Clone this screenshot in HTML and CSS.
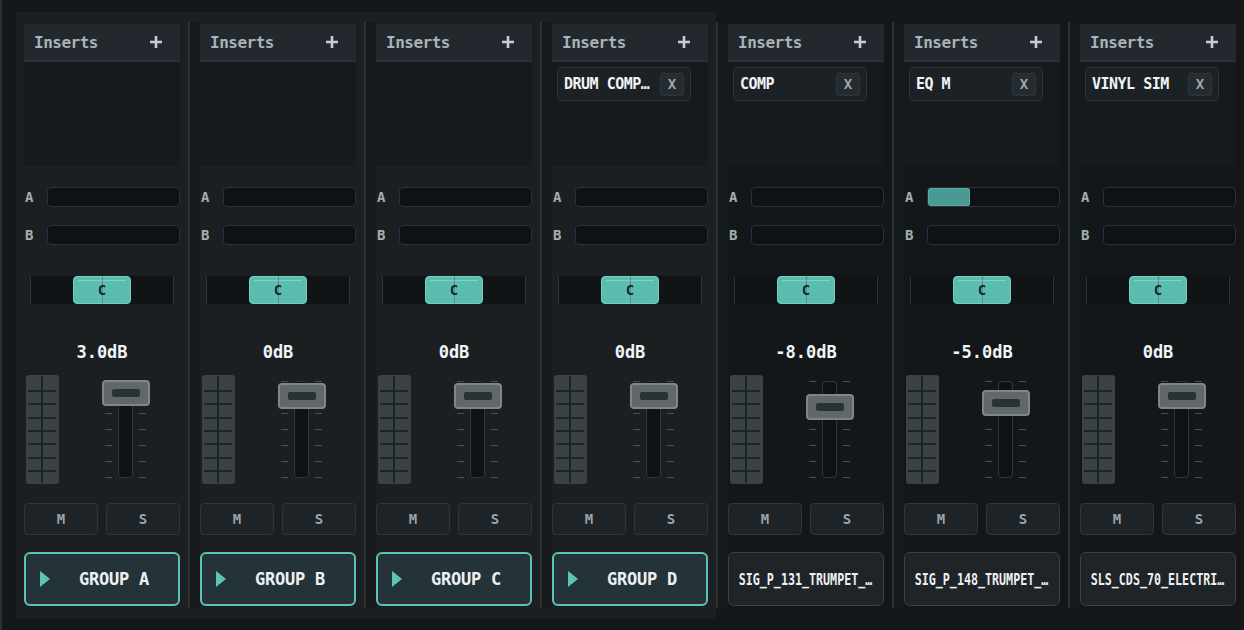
FILE: index.html
```html
<!DOCTYPE html>
<html lang="en">
<head>
  <meta charset="utf-8">
  <title>Mixer</title>
  <link rel="stylesheet" href="styles.css">
</head>
<body>
  <div class="mixer">

    <div class="group">

      <!-- group A -->
      <div class="strip">
        <div class="inserts-head"><span>Inserts</span><svg class="plus" width="12" height="12" viewBox="0 0 12 12"><path d="M6 0V12M0 6H12"/></svg></div>
        <div class="inserts-list"></div>
        <div class="sends">
          <div class="send"><span class="send-label">A</span><div class="send-bar"></div></div>
          <div class="send"><span class="send-label">B</span><div class="send-bar"></div></div>
        </div>
        <div class="pan"><div class="pan-knob">C</div></div>
        <div class="gain">3.0dB</div>
        <div class="levels">
          <div class="meter"></div>
          <div class="fader"><div class="fader-track"></div><div class="fader-knob" style="top: 0px"><span></span></div></div>
        </div>
        <div class="mute-solo"><button class="ms">M</button><button class="ms">S</button></div>
        <button class="name group-name"><svg class="play" width="10" height="16" viewBox="0 0 10 16"><path d="M0 0L10 8L0 16Z"/></svg><span>GROUP A</span></button>
      </div>
      <div class="handle"></div>

      <!-- group B -->
      <div class="strip">
        <div class="inserts-head"><span>Inserts</span><svg class="plus" width="12" height="12" viewBox="0 0 12 12"><path d="M6 0V12M0 6H12"/></svg></div>
        <div class="inserts-list"></div>
        <div class="sends">
          <div class="send"><span class="send-label">A</span><div class="send-bar"></div></div>
          <div class="send"><span class="send-label">B</span><div class="send-bar"></div></div>
        </div>
        <div class="pan"><div class="pan-knob">C</div></div>
        <div class="gain">0dB</div>
        <div class="levels">
          <div class="meter"></div>
          <div class="fader"><div class="fader-track"></div><div class="fader-knob" style="top: 3px"><span></span></div></div>
        </div>
        <div class="mute-solo"><button class="ms">M</button><button class="ms">S</button></div>
        <button class="name group-name"><svg class="play" width="10" height="16" viewBox="0 0 10 16"><path d="M0 0L10 8L0 16Z"/></svg><span>GROUP B</span></button>
      </div>
      <div class="handle"></div>

      <!-- group C -->
      <div class="strip">
        <div class="inserts-head"><span>Inserts</span><svg class="plus" width="12" height="12" viewBox="0 0 12 12"><path d="M6 0V12M0 6H12"/></svg></div>
        <div class="inserts-list"></div>
        <div class="sends">
          <div class="send"><span class="send-label">A</span><div class="send-bar"></div></div>
          <div class="send"><span class="send-label">B</span><div class="send-bar"></div></div>
        </div>
        <div class="pan"><div class="pan-knob">C</div></div>
        <div class="gain">0dB</div>
        <div class="levels">
          <div class="meter"></div>
          <div class="fader"><div class="fader-track"></div><div class="fader-knob" style="top: 3px"><span></span></div></div>
        </div>
        <div class="mute-solo"><button class="ms">M</button><button class="ms">S</button></div>
        <button class="name group-name"><svg class="play" width="10" height="16" viewBox="0 0 10 16"><path d="M0 0L10 8L0 16Z"/></svg><span>GROUP C</span></button>
      </div>
      <div class="handle"></div>

      <!-- group D -->
      <div class="strip">
        <div class="inserts-head"><span>Inserts</span><svg class="plus" width="12" height="12" viewBox="0 0 12 12"><path d="M6 0V12M0 6H12"/></svg></div>
        <div class="inserts-list">
          <div class="insert"><span class="insert-name">DRUM COMP…</span><button class="insert-x">X</button></div>
        </div>
        <div class="sends">
          <div class="send"><span class="send-label">A</span><div class="send-bar"></div></div>
          <div class="send"><span class="send-label">B</span><div class="send-bar"></div></div>
        </div>
        <div class="pan"><div class="pan-knob">C</div></div>
        <div class="gain">0dB</div>
        <div class="levels">
          <div class="meter"></div>
          <div class="fader"><div class="fader-track"></div><div class="fader-knob" style="top: 3px"><span></span></div></div>
        </div>
        <div class="mute-solo"><button class="ms">M</button><button class="ms">S</button></div>
        <button class="name group-name"><svg class="play" width="10" height="16" viewBox="0 0 10 16"><path d="M0 0L10 8L0 16Z"/></svg><span>GROUP D</span></button>
      </div>

    </div>
    <div class="handle"></div>

    <!-- channels -->
    <div class="strip">
      <div class="inserts-head"><span>Inserts</span><svg class="plus" width="12" height="12" viewBox="0 0 12 12"><path d="M6 0V12M0 6H12"/></svg></div>
      <div class="inserts-list">
        <div class="insert"><span class="insert-name">COMP</span><button class="insert-x">X</button></div>
      </div>
      <div class="sends">
        <div class="send"><span class="send-label">A</span><div class="send-bar"></div></div>
        <div class="send"><span class="send-label">B</span><div class="send-bar"></div></div>
      </div>
      <div class="pan"><div class="pan-knob">C</div></div>
      <div class="gain">-8.0dB</div>
      <div class="levels">
        <div class="meter"></div>
        <div class="fader"><div class="fader-track"></div><div class="fader-knob" style="top: 14px"><span></span></div></div>
      </div>
      <div class="mute-solo"><button class="ms">M</button><button class="ms">S</button></div>
      <button class="name"><span>SIG_P_131_TRUMPET_…</span></button>
    </div>
    <div class="handle"></div>

    <div class="strip">
      <div class="inserts-head"><span>Inserts</span><svg class="plus" width="12" height="12" viewBox="0 0 12 12"><path d="M6 0V12M0 6H12"/></svg></div>
      <div class="inserts-list">
        <div class="insert"><span class="insert-name">EQ M</span><button class="insert-x">X</button></div>
      </div>
      <div class="sends">
        <div class="send"><span class="send-label">A</span><div class="send-bar"><div class="send-fill" style="width: 32%"></div></div></div>
        <div class="send"><span class="send-label">B</span><div class="send-bar"></div></div>
      </div>
      <div class="pan"><div class="pan-knob">C</div></div>
      <div class="gain">-5.0dB</div>
      <div class="levels">
        <div class="meter"></div>
        <div class="fader"><div class="fader-track"></div><div class="fader-knob" style="top: 10px"><span></span></div></div>
      </div>
      <div class="mute-solo"><button class="ms">M</button><button class="ms">S</button></div>
      <button class="name"><span>SIG_P_148_TRUMPET_…</span></button>
    </div>
    <div class="handle"></div>

    <div class="strip">
      <div class="inserts-head"><span>Inserts</span><svg class="plus" width="12" height="12" viewBox="0 0 12 12"><path d="M6 0V12M0 6H12"/></svg></div>
      <div class="inserts-list">
        <div class="insert"><span class="insert-name">VINYL SIM</span><button class="insert-x">X</button></div>
      </div>
      <div class="sends">
        <div class="send"><span class="send-label">A</span><div class="send-bar"></div></div>
        <div class="send"><span class="send-label">B</span><div class="send-bar"></div></div>
      </div>
      <div class="pan"><div class="pan-knob">C</div></div>
      <div class="gain">0dB</div>
      <div class="levels">
        <div class="meter"></div>
        <div class="fader"><div class="fader-track"></div><div class="fader-knob" style="top: 3px"><span></span></div></div>
      </div>
      <div class="mute-solo"><button class="ms">M</button><button class="ms">S</button></div>
      <button class="name"><span>SLS_CDS_70_ELECTRI…</span></button>
    </div>

  </div>
</body>
</html>
```

FILE: styles.css
```css
* {
  box-sizing: border-box;
}

body {
  margin: 0;
  height: 630px;
  overflow: hidden;
  padding: 12px 0 0 14px;
  border-left: 2px solid #2a3034;
  background: #13171a;
  font-family: "DejaVu Sans Mono", "Liberation Mono", monospace;
  font-weight: bold;
}

button {
  font-family: inherit;
  font-weight: bold;
  padding: 0;
  margin: 0;
  cursor: pointer;
}

.mixer {
  display: flex;
  align-items: stretch;
}

.group {
  display: flex;
  padding-left: 8px;
  background: #1b1f22;
}

.strip {
  flex: none;
  width: 164px;
  padding: 12px 8px 12px 0;
  display: flex;
  flex-direction: column;
}

.handle {
  flex: none;
  width: 12px;
  margin: 10px 0;
  border-left: 2px solid #2a3034;
  background: #15191c;
}

/* inserts */

.inserts-head {
  height: 38px;
  padding: 0 18px 0 10px;
  display: flex;
  align-items: center;
  justify-content: space-between;
  border-bottom: 2px solid #2c3338;
  background: #22282d;
  color: #a9b3b9;
  font-size: 16px;
  letter-spacing: -0.5px;
}

.plus path {
  stroke: #c6ced3;
  stroke-width: 2.6;
}

.inserts-list {
  height: 104px;
  padding: 5px;
  background: #161a1f;
}

.insert {
  width: 134px;
  height: 34px;
  padding: 0 6px;
  display: flex;
  align-items: center;
  justify-content: space-between;
  border: 1px solid #30373c;
  border-radius: 5px;
  background: #1c2126;
}

.insert-name {
  color: #f1f4f6;
  font-size: 15px;
  letter-spacing: -0.5px;
  white-space: nowrap;
}

.insert-x {
  width: 24px;
  height: 23px;
  border: 1px solid #30373c;
  border-radius: 3px;
  background: #252b30;
  color: #a0a9ae;
  font-size: 14px;
}

/* sends */

.sends {
  margin-top: 21px;
  display: flex;
  flex-direction: column;
  gap: 18px;
}

.send {
  height: 20px;
  display: flex;
  align-items: center;
}

.send-label {
  width: 23px;
  padding-left: 1px;
  color: #a4aeb4;
  font-size: 14px;
}

.send-bar {
  flex: 1;
  height: 20px;
  border: 1px solid #2b3236;
  border-radius: 4px;
  background: #0e1215;
  overflow: hidden;
}

.send-fill {
  height: 100%;
  border-radius: 3px;
  background: #4a9a93;
  box-shadow: inset 0 0 0 1px #58aba3;
}

/* pan */

.pan {
  position: relative;
  height: 28px;
  margin: 31px 6px 0;
  display: flex;
  justify-content: center;
  border-left: 1px solid #2d3438;
  border-right: 1px solid #2d3438;
  background: #0f1316;
}

.pan::after {
  content: "";
  position: absolute;
  left: 50%;
  top: -2px;
  bottom: -2px;
  width: 1px;
  background: rgba(42, 50, 54, 0.3);
}

.pan-knob {
  position: relative;
  width: 58px;
  height: 28px;
  display: flex;
  align-items: center;
  justify-content: center;
  border: 1px solid #74cfc3;
  border-radius: 4px;
  background: #5bbcb0;
  color: #1b2628;
  font-size: 14px;
}

.pan-knob::before {
  content: "";
  position: absolute;
  top: 3px;
  left: 4px;
  right: 4px;
  height: 1px;
  background: rgba(255, 255, 255, 0.28);
}

/* gain, meter and fader */

.gain {
  margin-top: 38px;
  line-height: 20px;
  text-align: center;
  color: #f2f4f5;
  font-size: 17px;
}

.levels {
  height: 109px;
  margin-top: 13px;
  display: flex;
  align-items: flex-start;
}

.meter {
  position: relative;
  width: 33px;
  height: 109px;
  margin-left: 2px;
  border-radius: 3px;
  background: #3a4245;
}

.meter::before {
  content: "";
  position: absolute;
  left: 15px;
  top: 1px;
  bottom: 1px;
  width: 2px;
  background: #1f2427;
}

.meter::after {
  content: "";
  position: absolute;
  left: 2px;
  right: 3px;
  top: 15px;
  bottom: 12px;
  background: repeating-linear-gradient(to bottom, #1f2427 0 2px, transparent 2px 13.33px);
}

.fader {
  position: relative;
  width: 48px;
  height: 98px;
  margin: 5px 0 0 43px;
}

.fader::before,
.fader::after {
  content: "";
  position: absolute;
  top: 1px;
  width: 7px;
  height: 98px;
  background: repeating-linear-gradient(to bottom, #485054 0 1.5px, transparent 1.5px 16px);
}

.fader::before {
  left: 3px;
}

.fader::after {
  left: 37px;
}

.fader-track {
  width: 15px;
  height: 97px;
  margin: 1px 0 0 16px;
  border: 1px solid #30373b;
  border-radius: 4px;
  background: #0e1215;
}

.fader-knob {
  position: absolute;
  z-index: 1;
  left: 0;
  width: 48px;
  height: 26px;
  display: flex;
  align-items: center;
  justify-content: center;
  border: 2px solid #7e868a;
  border-radius: 4px;
  background: #60686c;
}

.fader-knob span {
  width: 28px;
  height: 8px;
  border-radius: 2px;
  background: #2b3236;
}

/* buttons */

.mute-solo {
  margin-top: 19px;
  display: flex;
  gap: 8px;
}

.ms {
  flex: 1;
  height: 32px;
  border: 1px solid #30373c;
  border-radius: 4px;
  background: #1e2327;
  color: #9ba5ab;
  font-size: 14px;
}

.name {
  height: 54px;
  margin-top: 17px;
  padding: 0;
  display: flex;
  align-items: center;
  justify-content: center;
  border: 1px solid #3b4348;
  border-radius: 6px;
  background: #1f2428;
  color: #eef1f3;
  font-size: 16px;
  white-space: nowrap;
}

/* long channel names are drawn condensed */
.name span {
  display: inline-block;
  transform: scaleX(0.73);
}

.group-name {
  padding: 0 0 0 14px;
  justify-content: flex-start;
  border: 2px solid #5cc4b7;
  background: #243338;
  font-size: 17px;
  letter-spacing: -0.2px;
}

.group-name span {
  flex: 1;
  text-align: center;
  transform: none;
}

.play path {
  fill: #5cc4b7;
}
```
